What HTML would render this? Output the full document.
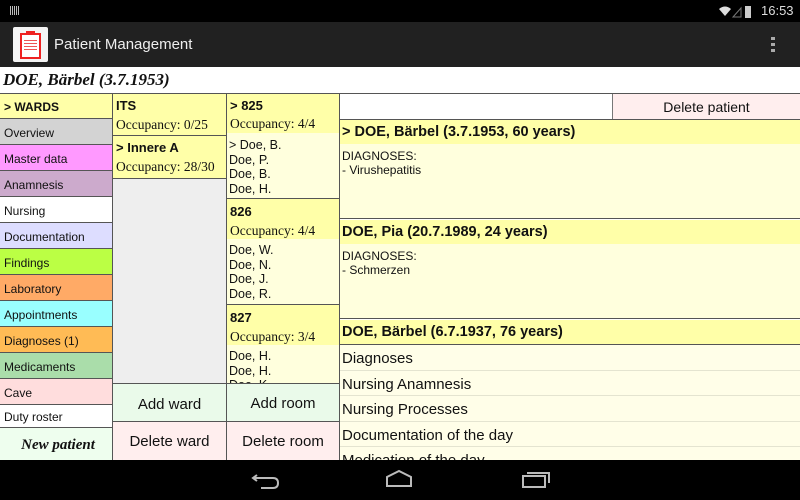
<!DOCTYPE html>
<html><head><meta charset="utf-8"><style>
*{margin:0;padding:0;box-sizing:border-box}
body{width:800px;height:500px;overflow:hidden;position:relative;background:#fff;font-family:"Liberation Sans",sans-serif;color:#111}
.a{position:absolute}
.l{position:absolute;left:0;width:112px;font-size:12px;padding-left:4px;padding-top:2px;border-bottom:1px solid #555;display:flex;align-items:center}
.s{font-family:"Liberation Serif",serif}
.h{background:#ffffa8}
.p{background:#ffffdd}
.b{font-weight:bold}
</style></head><body>
<div class="a" style="left:0;top:0;width:800px;height:22px;background:#000"></div>
<div class="a" style="left:10px;top:6px;width:9px;height:9px;background:repeating-linear-gradient(90deg,#bbb 0 1px,transparent 1px 2px)"></div>
<svg class="a" style="left:717px;top:4px" width="40" height="16"><path d="M2 5 Q8 0 14 5 L8 12Z" fill="#ddd"/><path d="M16 13 L24 4 L24 13Z" fill="none" stroke="#777"/><rect x="28" y="2" width="6" height="12" fill="#ccc"/></svg>
<div class="a" style="left:761px;top:3px;color:#ddd;font-size:13px">16:53</div>
<div class="a" style="left:0;top:22px;width:800px;height:45px;background:#212121"></div>
<div class="a" style="left:13px;top:27px;width:35px;height:35px;background:#f4f4f4;border-radius:2px"></div>
<div class="a" style="left:20px;top:33px;width:21px;height:26px;border:2px solid #e22;background:#fff"></div>
<div class="a" style="left:26px;top:31px;width:9px;height:4px;background:#e22"></div>
<div class="a" style="left:24px;top:40px;width:13px;height:10px;background:repeating-linear-gradient(#e55 0 1px,transparent 1px 3px)"></div>
<div class="a" style="left:54px;top:36px;color:#eee;font-size:15px">Patient Management</div>
<div class="a" style="left:771px;top:37px;width:4px;height:16px;background:repeating-linear-gradient(#aaa 0 3px,transparent 3px 6px)"></div>
<div class="a s" style="left:3px;top:70px;font-size:17px;font-weight:bold;font-style:italic">DOE, Bärbel (3.7.1953)</div>
<div class="a" style="left:0;top:93px;width:800px;height:1px;background:#555"></div>

<div class="l b h" style="top:94px;height:25px">&gt; WARDS</div>
<div class="l" style="top:119px;height:26px;background:#d3d3d3">Overview</div>
<div class="l" style="top:145px;height:26px;background:#ff99ff">Master data</div>
<div class="l" style="top:171px;height:26px;background:#ccaacc">Anamnesis</div>
<div class="l" style="top:197px;height:26px;background:#fff">Nursing</div>
<div class="l" style="top:223px;height:26px;background:#ddddff">Documentation</div>
<div class="l" style="top:249px;height:26px;background:#bbff44">Findings</div>
<div class="l" style="top:275px;height:26px;background:#ffaa66">Laboratory</div>
<div class="l" style="top:301px;height:26px;background:#99ffff">Appointments</div>
<div class="l" style="top:327px;height:26px;background:#ffbb55">Diagnoses (1)</div>
<div class="l" style="top:353px;height:26px;background:#aaddaa">Medicaments</div>
<div class="l" style="top:379px;height:26px;background:#ffdddd">Cave</div>
<div class="l" style="top:405px;height:23px;background:#fff">Duty roster</div>
<div class="l s" style="top:428px;height:32px;background:#eefeee;justify-content:center;font-size:15px;font-weight:bold;font-style:italic;border:0">New patient</div>
<div class="a" style="left:112px;top:94px;width:1px;height:366px;background:#555"></div>

<div class="a h" style="left:113px;top:94px;width:113px;height:42px;border-bottom:1px solid #555;padding:4px 3px"><div class="b" style="font-size:13px">ITS</div><div class="s" style="font-size:13.5px;margin-top:4px">Occupancy: 0/25</div></div>
<div class="a h" style="left:113px;top:136px;width:113px;height:43px;border-bottom:1px solid #555;padding:4px 3px"><div class="b" style="font-size:13px">&gt; Innere A</div><div class="s" style="font-size:13.5px;margin-top:4px">Occupancy: 28/30</div></div>
<div class="a" style="left:113px;top:179px;width:113px;height:204px;background:#eee"></div>
<div class="a" style="left:113px;top:383px;width:226px;height:1px;background:#555"></div>
<div class="a" style="left:113px;top:384px;width:113px;height:38px;background:#eafaea;font-size:15px;text-align:center;line-height:42px">Add ward</div>
<div class="a" style="left:113px;top:421px;width:226px;height:1px;background:#555"></div>
<div class="a" style="left:113px;top:422px;width:113px;height:38px;background:#ffeeee;font-size:15px;text-align:center;line-height:40px">Delete ward</div>
<div class="a" style="left:226px;top:94px;width:1px;height:366px;background:#555"></div>

<div class="a h" style="left:227px;top:94px;width:112px;height:39px;padding:4px 3px"><div class="b" style="font-size:13px">&gt; 825</div><div class="s" style="font-size:13.5px;margin-top:3px">Occupancy: 4/4</div></div>
<div class="a p" style="left:227px;top:133px;width:112px;height:66px;border-bottom:1px solid #555;padding:5px 2px;font-size:12.5px;line-height:14.5px">&gt; Doe, B.<br>Doe, P.<br>Doe, B.<br>Doe, H.</div>
<div class="a h" style="left:227px;top:199px;width:112px;height:40px;padding:5px 3px"><div class="b" style="font-size:13px">826</div><div class="s" style="font-size:13.5px;margin-top:4px">Occupancy: 4/4</div></div>
<div class="a p" style="left:227px;top:239px;width:112px;height:66px;border-bottom:1px solid #555;padding:4px 2px;font-size:12.5px;line-height:14.5px">Doe, W.<br>Doe, N.<br>Doe, J.<br>Doe, R.</div>
<div class="a h" style="left:227px;top:305px;width:112px;height:40px;padding:5px 3px"><div class="b" style="font-size:13px">827</div><div class="s" style="font-size:13.5px;margin-top:4px">Occupancy: 3/4</div></div>
<div class="a p" style="left:227px;top:345px;width:112px;height:38px;padding:4px 2px;font-size:12.5px;line-height:14.5px;overflow:hidden">Doe, H.<br>Doe, H.<br>Doe, K.</div>
<div class="a" style="left:227px;top:384px;width:112px;height:37px;background:#eafaea;font-size:15px;text-align:center;line-height:40px">Add room</div>
<div class="a" style="left:227px;top:422px;width:112px;height:38px;background:#ffeeee;font-size:15px;text-align:center;line-height:40px">Delete room</div>
<div class="a" style="left:339px;top:94px;width:1px;height:366px;background:#555"></div>

<div class="a" style="left:612px;top:94px;width:1px;height:25px;background:#777"></div>
<div class="a" style="left:613px;top:94px;width:187px;height:25px;background:#ffeeee;font-size:14px;text-align:center;line-height:27px">Delete patient</div>
<div class="a" style="left:340px;top:119px;width:460px;height:1px;background:#555"></div>
<div class="a h b" style="left:340px;top:120px;width:460px;height:24px;padding-left:2px;font-size:14.5px;line-height:25px">&gt; DOE, Bärbel (3.7.1953, 60 years)</div>
<div class="a p" style="left:340px;top:144px;width:460px;height:75px;border-bottom:1px solid #555;padding:5px 2px;font-size:12px;line-height:14px">DIAGNOSES:<br>- Virushepatitis</div>
<div class="a h b" style="left:340px;top:220px;width:460px;height:24px;padding-left:2px;font-size:14.5px;line-height:25px">DOE, Pia (20.7.1989, 24 years)</div>
<div class="a p" style="left:340px;top:244px;width:460px;height:75px;border-bottom:1px solid #555;padding:5px 2px;font-size:12px;line-height:14px">DIAGNOSES:<br>- Schmerzen</div>
<div class="a h b" style="left:340px;top:320px;width:460px;height:25px;padding-left:2px;font-size:14.5px;line-height:25px;border-bottom:1px solid #555">DOE, Bärbel (6.7.1937, 76 years)</div>
<div class="a" style="left:340px;top:345px;width:460px;height:115px;background:#fffee8;font-size:15px;overflow:hidden">
<div style="height:25.5px;line-height:28px;padding-left:2px;border-bottom:1px solid #e4e4d0">Diagnoses</div>
<div style="height:25.5px;line-height:28px;padding-left:2px;border-bottom:1px solid #e4e4d0">Nursing Anamnesis</div>
<div style="height:25.5px;line-height:28px;padding-left:2px;border-bottom:1px solid #e4e4d0">Nursing Processes</div>
<div style="height:25.5px;line-height:28px;padding-left:2px;border-bottom:1px solid #e4e4d0">Documentation of the day</div>
<div style="height:25.5px;line-height:28px;padding-left:2px">Medication of the day</div>
</div>

<div class="a" style="left:0;top:460px;width:800px;height:40px;background:#000"></div>
<svg class="a" style="left:245px;top:468px" width="400" height="26"><path d="M12 7 L8 10 L12 13 M8 10 H28 Q33 10 33 15 Q33 20 28 20 H16" fill="none" stroke="#bbb" stroke-width="2"/><path d="M142 18 L142 9 L154 3 L166 9 L166 18Z" fill="none" stroke="#bbb" stroke-width="2"/><rect x="278" y="8" width="22" height="11" fill="none" stroke="#bbb" stroke-width="2"/><path d="M282 5 H304 V15" fill="none" stroke="#bbb" stroke-width="2"/></svg>
</body></html>
